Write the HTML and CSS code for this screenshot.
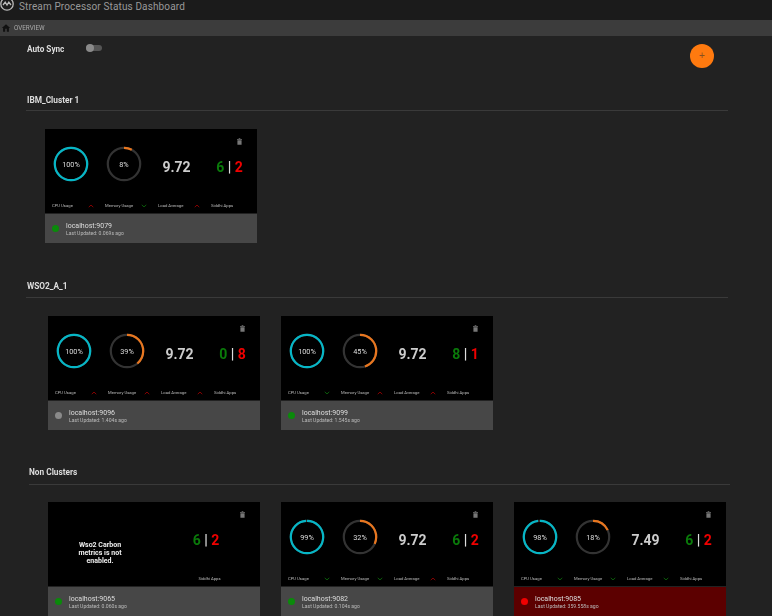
FILE: index.html
```html
<!DOCTYPE html>
<html lang="en">
<head>
    <meta charset="UTF-8">
    <title>Stream Processor Status Dashboard</title>
    <link rel="stylesheet" href="styles.css">
</head>
<body>

<header class="app-header">
    <svg class="logo" width="14" height="14" viewBox="0 0 14 14"><circle cx="7" cy="7" r="6.2"/><path d="M3 8 L5.2 5.2 L7 8 L8.8 5.2 L11 8"/></svg>
    <span class="app-title">Stream Processor Status Dashboard</span>
</header>

<nav class="crumb">
    <svg width="10" height="10" viewBox="0 0 24 24"><path d="M10 21v-7h4v7h5v-9h3L12 3 2 12h3v9z"/></svg>
    <span>OVERVIEW</span>
</nav>

<div class="sync-row">
    <span class="sync-label">Auto Sync</span>
    <span class="toggle"><span class="thumb"></span></span>
    <button class="fab" type="button">+</button>
</div>

<section class="group">
    <h2>IBM_Cluster 1</h2>
    <div class="cards cards-first">
        <div class="card">
            <div class="card-body">
                <div class="trash-row"><svg class="trash" width="5" height="7" viewBox="0 0 6 8"><path d="M2 0h2v1h2v1H0V1h2zM.5 2.5h5V8h-5z"/></svg></div>
                <div class="metrics">
                    <svg class="ring" width="36" height="36" viewBox="0 0 36 36"><circle class="track" cx="18" cy="18" r="16.2"/><circle class="arc cyan" cx="18" cy="18" r="16.2" pathLength="100" stroke-dasharray="100 100"/><text x="18" y="20.6">100%</text></svg>
                    <svg class="ring" width="36" height="36" viewBox="0 0 36 36"><circle class="track" cx="18" cy="18" r="16.2"/><circle class="arc orange" cx="18" cy="18" r="16.2" pathLength="100" stroke-dasharray="8 100"/><text x="18" y="20.6">8%</text></svg>
                    <div class="load">9.72</div>
                    <div class="apps"><span class="up">6</span> <span class="sep">|</span> <span class="down">2</span></div>
                </div>
                <div class="labels">
                    <span>CPU Usage<svg class="chev bad" width="6" height="4" viewBox="0 0 8 4"><path d="M1 3.5 4 .8 7 3.5"/></svg></span>
                    <span>Memory Usage<svg class="chev good" width="6" height="4" viewBox="0 0 8 4"><path d="M1 .5 4 3.2 7 .5"/></svg></span>
                    <span>Load Average<svg class="chev bad" width="6" height="4" viewBox="0 0 8 4"><path d="M1 3.5 4 .8 7 3.5"/></svg></span>
                    <span>Siddhi Apps</span>
                </div>
            </div>
            <div class="card-foot">
                <span class="dot green"></span>
                <div><div class="host">localhost:9079</div><div class="updated">Last Updated: 0.069s ago</div></div>
            </div>
        </div>
    </div>
</section>

<section class="group group-wso2">
    <h2>WSO2_A_1</h2>
    <div class="cards">
        <div class="card">
            <div class="card-body">
                <div class="trash-row"><svg class="trash" width="5" height="7" viewBox="0 0 6 8"><path d="M2 0h2v1h2v1H0V1h2zM.5 2.5h5V8h-5z"/></svg></div>
                <div class="metrics">
                    <svg class="ring" width="36" height="36" viewBox="0 0 36 36"><circle class="track" cx="18" cy="18" r="16.2"/><circle class="arc cyan" cx="18" cy="18" r="16.2" pathLength="100" stroke-dasharray="100 100"/><text x="18" y="20.6">100%</text></svg>
                    <svg class="ring" width="36" height="36" viewBox="0 0 36 36"><circle class="track" cx="18" cy="18" r="16.2"/><circle class="arc orange" cx="18" cy="18" r="16.2" pathLength="100" stroke-dasharray="39 100"/><text x="18" y="20.6">39%</text></svg>
                    <div class="load">9.72</div>
                    <div class="apps"><span class="up">0</span> <span class="sep">|</span> <span class="down">8</span></div>
                </div>
                <div class="labels">
                    <span>CPU Usage<svg class="chev bad" width="6" height="4" viewBox="0 0 8 4"><path d="M1 3.5 4 .8 7 3.5"/></svg></span>
                    <span>Memory Usage<svg class="chev bad" width="6" height="4" viewBox="0 0 8 4"><path d="M1 3.5 4 .8 7 3.5"/></svg></span>
                    <span>Load Average<svg class="chev bad" width="6" height="4" viewBox="0 0 8 4"><path d="M1 3.5 4 .8 7 3.5"/></svg></span>
                    <span>Siddhi Apps</span>
                </div>
            </div>
            <div class="card-foot">
                <span class="dot grey"></span>
                <div><div class="host">localhost:9096</div><div class="updated">Last Updated: 1.404s ago</div></div>
            </div>
        </div>
        <div class="card">
            <div class="card-body">
                <div class="trash-row"><svg class="trash" width="5" height="7" viewBox="0 0 6 8"><path d="M2 0h2v1h2v1H0V1h2zM.5 2.5h5V8h-5z"/></svg></div>
                <div class="metrics">
                    <svg class="ring" width="36" height="36" viewBox="0 0 36 36"><circle class="track" cx="18" cy="18" r="16.2"/><circle class="arc cyan" cx="18" cy="18" r="16.2" pathLength="100" stroke-dasharray="100 100"/><text x="18" y="20.6">100%</text></svg>
                    <svg class="ring" width="36" height="36" viewBox="0 0 36 36"><circle class="track" cx="18" cy="18" r="16.2"/><circle class="arc orange" cx="18" cy="18" r="16.2" pathLength="100" stroke-dasharray="45 100"/><text x="18" y="20.6">45%</text></svg>
                    <div class="load">9.72</div>
                    <div class="apps"><span class="up">8</span> <span class="sep">|</span> <span class="down">1</span></div>
                </div>
                <div class="labels">
                    <span>CPU Usage<svg class="chev good" width="6" height="4" viewBox="0 0 8 4"><path d="M1 .5 4 3.2 7 .5"/></svg></span>
                    <span>Memory Usage<svg class="chev bad" width="6" height="4" viewBox="0 0 8 4"><path d="M1 3.5 4 .8 7 3.5"/></svg></span>
                    <span>Load Average<svg class="chev bad" width="6" height="4" viewBox="0 0 8 4"><path d="M1 3.5 4 .8 7 3.5"/></svg></span>
                    <span>Siddhi Apps</span>
                </div>
            </div>
            <div class="card-foot">
                <span class="dot green"></span>
                <div><div class="host">localhost:9099</div><div class="updated">Last Updated: 1.545s ago</div></div>
            </div>
        </div>
    </div>
</section>

<section class="group group-non">
    <h2>Non Clusters</h2>
    <div class="cards">
        <div class="card">
            <div class="card-body">
                <div class="trash-row"><svg class="trash" width="5" height="7" viewBox="0 0 6 8"><path d="M2 0h2v1h2v1H0V1h2zM.5 2.5h5V8h-5z"/></svg></div>
                <div class="no-metrics">
                    <div class="no-msg">Wso2 Carbon metrics is not enabled.</div>
                    <div class="no-apps">
                        <div class="apps"><span class="up">6</span> <span class="sep">|</span> <span class="down">2</span></div>
                        <div class="no-label">Siddhi Apps</div>
                    </div>
                </div>
            </div>
            <div class="card-foot">
                <span class="dot green"></span>
                <div><div class="host">localhost:9065</div><div class="updated">Last Updated: 0.060s ago</div></div>
            </div>
        </div>
        <div class="card">
            <div class="card-body">
                <div class="trash-row"><svg class="trash" width="5" height="7" viewBox="0 0 6 8"><path d="M2 0h2v1h2v1H0V1h2zM.5 2.5h5V8h-5z"/></svg></div>
                <div class="metrics">
                    <svg class="ring" width="36" height="36" viewBox="0 0 36 36"><circle class="track" cx="18" cy="18" r="16.2"/><circle class="arc cyan" cx="18" cy="18" r="16.2" pathLength="100" stroke-dasharray="99 100"/><text x="18" y="20.6">99%</text></svg>
                    <svg class="ring" width="36" height="36" viewBox="0 0 36 36"><circle class="track" cx="18" cy="18" r="16.2"/><circle class="arc orange" cx="18" cy="18" r="16.2" pathLength="100" stroke-dasharray="32 100"/><text x="18" y="20.6">32%</text></svg>
                    <div class="load">9.72</div>
                    <div class="apps"><span class="up">6</span> <span class="sep">|</span> <span class="down">2</span></div>
                </div>
                <div class="labels">
                    <span>CPU Usage<svg class="chev good" width="6" height="4" viewBox="0 0 8 4"><path d="M1 .5 4 3.2 7 .5"/></svg></span>
                    <span>Memory Usage<svg class="chev good" width="6" height="4" viewBox="0 0 8 4"><path d="M1 .5 4 3.2 7 .5"/></svg></span>
                    <span>Load Average<svg class="chev bad" width="6" height="4" viewBox="0 0 8 4"><path d="M1 3.5 4 .8 7 3.5"/></svg></span>
                    <span>Siddhi Apps</span>
                </div>
            </div>
            <div class="card-foot">
                <span class="dot green"></span>
                <div><div class="host">localhost:9082</div><div class="updated">Last Updated: 0.104s ago</div></div>
            </div>
        </div>
        <div class="card">
            <div class="card-body">
                <div class="trash-row"><svg class="trash" width="5" height="7" viewBox="0 0 6 8"><path d="M2 0h2v1h2v1H0V1h2zM.5 2.5h5V8h-5z"/></svg></div>
                <div class="metrics">
                    <svg class="ring" width="36" height="36" viewBox="0 0 36 36"><circle class="track" cx="18" cy="18" r="16.2"/><circle class="arc cyan" cx="18" cy="18" r="16.2" pathLength="100" stroke-dasharray="98 100"/><text x="18" y="20.6">98%</text></svg>
                    <svg class="ring" width="36" height="36" viewBox="0 0 36 36"><circle class="track" cx="18" cy="18" r="16.2"/><circle class="arc orange" cx="18" cy="18" r="16.2" pathLength="100" stroke-dasharray="18 100"/><text x="18" y="20.6">18%</text></svg>
                    <div class="load">7.49</div>
                    <div class="apps"><span class="up">6</span> <span class="sep">|</span> <span class="down">2</span></div>
                </div>
                <div class="labels">
                    <span>CPU Usage<svg class="chev good" width="6" height="4" viewBox="0 0 8 4"><path d="M1 .5 4 3.2 7 .5"/></svg></span>
                    <span>Memory Usage<svg class="chev good" width="6" height="4" viewBox="0 0 8 4"><path d="M1 .5 4 3.2 7 .5"/></svg></span>
                    <span>Load Average<svg class="chev good" width="6" height="4" viewBox="0 0 8 4"><path d="M1 .5 4 3.2 7 .5"/></svg></span>
                    <span>Siddhi Apps</span>
                </div>
            </div>
            <div class="card-foot card-foot-down">
                <span class="dot red"></span>
                <div><div class="host">localhost:9085</div><div class="updated">Last Updated: 359.558s ago</div></div>
            </div>
        </div>
    </div>
</section>

</body>
</html>
```

FILE: styles.css
```css
/* dashboard overview */
html, body {
    height: 616px;
    overflow: hidden;
}
body {
    margin: 0;
    background-color: #222;
    color: #fff;
    font-family: Roboto, "Liberation Sans", sans-serif;
    filter: blur(0.5px);
}

.app-header {
    height: 20px;
    background-color: #1b1b1b;
    display: flex;
    align-items: flex-start;
    overflow: hidden;
}
.logo {
    flex: none;
    margin-top: -3px;
    fill: none;
    stroke: #bbb;
    stroke-width: 1.3;
}
.app-title {
    margin-left: 5px;
    font-size: 10px;
    line-height: 13px;
    color: #999;
    letter-spacing: 0.13px;
}

.crumb {
    height: 16px;
    background-color: #3c3c3c;
    display: flex;
    align-items: center;
    padding-left: 1px;
    font-size: 6.3px;
    color: #aaa;
}
.crumb svg {
    fill: #111;
    margin-right: 3px;
}

.sync-row {
    height: 58px;
    padding-left: 27px;
    display: flex;
    align-items: flex-start;
    position: relative;
}
.sync-label {
    margin-top: 9px;
    font-size: 8.2px;
    line-height: 9px;
    font-weight: bold;
    color: #ddd;
}
.toggle {
    margin: 9px 0 0 22px;
    width: 16px;
    height: 6px;
    border-radius: 3px;
    background-color: #555;
    position: relative;
}
.thumb {
    position: absolute;
    left: 0;
    top: -1px;
    width: 8px;
    height: 8px;
    border-radius: 50%;
    background-color: #8a8a8a;
}
.fab {
    position: absolute;
    left: 690px;
    top: 8px;
    width: 24px;
    height: 24px;
    padding: 0;
    border: 0;
    border-radius: 50%;
    background-color: #ff7a0f;
    color: #8a5020;
    font-size: 10px;
    line-height: 24px;
}

.group {
    margin: 0 44px 0 26px;
}
.group h2 {
    margin: 0;
    padding: 1px 0 5px 1px;
    font-size: 8.3px;
    line-height: 10px;
    font-weight: bold;
    color: #ddd;
    border-bottom: 1px solid #3a3a3a;
}
.group-wso2 {
    margin-top: 37px;
}
.group-non {
    margin: 36px 42px 0 29px;
}
.group-non h2 {
    padding-left: 0;
    padding-bottom: 7px;
}
.group-wso2 h2 {
    padding-bottom: 6px;
}

.cards {
    display: flex;
    gap: 21px;
    margin: 18px 0 0 22px;
}
.cards-first {
    margin-left: 19px;
}
.group-non .cards {
    margin: 17px 0 0 19px;
}

.card {
    width: 212px;
    flex: none;
}
.card-body {
    height: 84px;
    background-color: #000;
    margin-bottom: 1px;
}
.trash-row {
    height: 17px;
    display: flex;
    justify-content: flex-end;
    align-items: flex-end;
    padding-right: 15px;
}
.trash {
    fill: #777;
    margin-bottom: 1px;
}

.metrics {
    display: grid;
    grid-template-columns: repeat(4, 53px);
    justify-items: center;
    align-items: center;
    height: 36px;
    margin-left: -1px;
}
.ring {
    display: block;
}
.ring text {
    font-size: 7.3px;
    fill: #ddd;
    text-anchor: middle;
}
.track, .arc {
    fill: none;
    stroke-width: 2.2;
}
.track {
    stroke: #333;
}
.arc {
    transform: rotate(-90deg);
    transform-origin: 18px 18px;
}
.cyan {
    stroke: #06b6c6;
}
.orange {
    stroke: #e8761f;
}

.load, .apps {
    font-size: 14px;
    line-height: 16px;
    font-weight: bold;
    white-space: nowrap;
}
.metrics .load, .metrics .apps {
    margin-top: 5px;
}
.load {
    color: #ccc;
}
.up {
    color: #0a7a0a;
}
.down {
    color: #f00000;
}
.sep {
    color: #ddd;
}

.labels {
    display: grid;
    grid-template-columns: repeat(4, 53px);
    margin-top: 21px;
    padding-left: 7px;
    font-size: 4.2px;
    line-height: 6px;
    color: #bbb;
    white-space: nowrap;
}
.labels span {
    display: flex;
    align-items: center;
}
.chev {
    position: absolute;
    margin-left: 36px;
    fill: none;
    stroke-width: 1.3;
}
.bad {
    stroke: #8b0000;
}
.good {
    stroke: #0a5f0a;
}

.no-metrics {
    display: grid;
    grid-template-columns: 104px 108px;
}
.no-msg {
    width: 50px;
    justify-self: center;
    margin-top: 22px;
    text-align: center;
    font-size: 7px;
    line-height: 8px;
    font-weight: bold;
    color: #eee;
}
.no-apps {
    text-align: center;
    margin-top: 13px;
}
.no-label {
    margin-top: 28px;
    padding-left: 7px;
    font-size: 4.2px;
    line-height: 6px;
    color: #bbb;
}

.card-foot {
    height: 29px;
    background-color: #474747;
    display: flex;
    align-items: center;
    padding-left: 7px;
}
.card-foot-down {
    background-color: #5c0000;
}
.dot {
    width: 7px;
    height: 7px;
    border-radius: 50%;
    margin-right: 7px;
}
.green {
    background-color: #0a8a0a;
}
.grey {
    background-color: #8a8a8a;
}
.red {
    background-color: #f00000;
}
.host {
    font-size: 7px;
    line-height: 8px;
    color: #ddd;
}
.updated {
    font-size: 5.1px;
    line-height: 6px;
    color: #bbb;
}
```
